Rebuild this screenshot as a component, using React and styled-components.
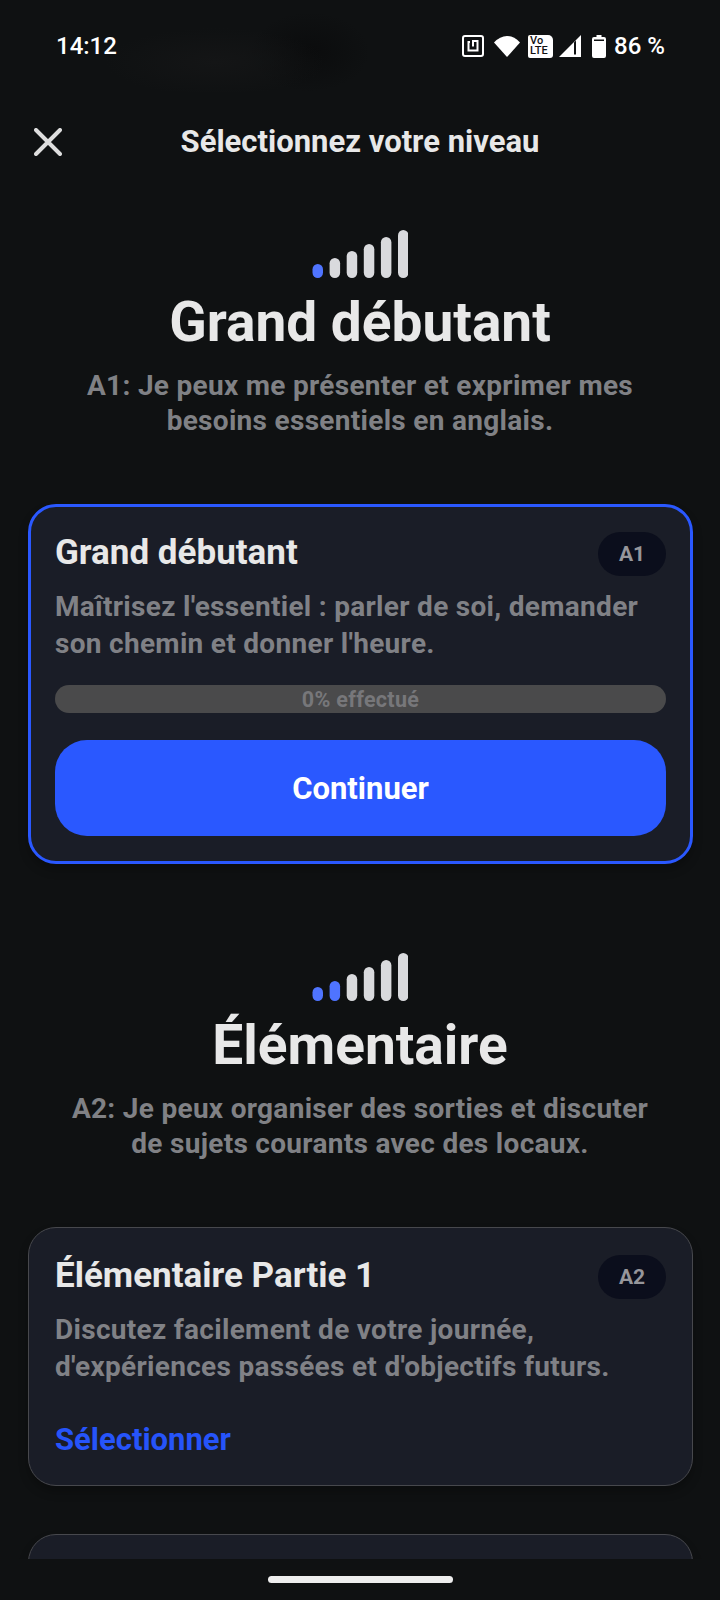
import React from "react";
import styled, { createGlobalStyle } from "styled-components";

const GlobalStyle = createGlobalStyle`
  html, body {
    margin: 0;
    padding: 0;
    background: #0f1112;
  }
  * {
    box-sizing: border-box;
  }
`

const Screen = styled.div`
  display: flex;
  flex-direction: column;
  width: 720px;
  height: 1600px;
  overflow: hidden;
  background: #0f1112;
  font-family: Roboto, "Noto Sans", sans-serif;
  font-weight: 700;
`

const Scroller = styled.div`
  flex: 1;
  min-height: 0;
  overflow: hidden;
`

const StatusBar = styled.div`
  display: flex;
  align-items: center;
  justify-content: space-between;
  height: 92px;
  padding: 0 55px 0 56px;
  color: #fff;
  background: radial-gradient(ellipse 110px 34px at 215px 62px, #141516, transparent),
    radial-gradient(ellipse 60px 40px at 310px 52px, #0b0c0d, transparent);
`

const Clock = styled.span`
  font-size: 24px;
  font-weight: 500;
`

const StatusIcons = styled.div`
  display: flex;
  align-items: center;
`

const StatusIcon = styled.span`
  display: flex;
  margin-right: ${(p) => p.$gap}px;
`

const Battery = styled.span`
  font-size: 24px;
  font-weight: 500;
  white-space: nowrap;
`

const VolteBadge = styled.span`
  display: flex;
  flex-direction: column;
  justify-content: center;
  width: 25px;
  height: 23px;
  margin-right: 6px;
  padding-left: 2px;
  border-radius: 2px 5px 3px 2px;
  background: #fff;
  color: #111;
  font-size: 11px;
  font-weight: 500;
  line-height: 10.500px;
`

const Header = styled.div`
  display: flex;
  align-items: center;
  justify-content: center;
  position: relative;
  height: 98px;
`

const CloseButton = styled.div`
  position: absolute;
  left: 34px;
  top: 36px;
  display: flex;
  color: #dedede;
`

const HeaderTitle = styled.h1`
  margin: 0;
  color: #e8e8e8;
  font-size: 31px;
  font-weight: 700;
`

const LevelHero = styled.section`
  display: flex;
  flex-direction: column;
  align-items: center;
  padding-top: ${(p) => p.$top}px;
  text-align: center;
`

const LevelTitle = styled.h2`
  margin: 12px 0 14px;
  color: #e8e8e8;
  font-size: 55px;
  font-weight: 700;
  line-height: 64px;
`

const LevelText = styled.p`
  margin: 0;
  color: #808185;
  font-size: 28px;
  line-height: 35px;
  letter-spacing: 0.3px;
`

const Card = styled.div`
  margin: ${(p) => p.$top}px 27px 0 28px;
  min-height: ${(p) => p.$minHeight || 0}px;
  padding: calc(28px - ${(p) => (p.$selected ? 3 : 1)}px) calc(27px - ${(p) => (p.$selected ? 3 : 1)}px);
  border: ${(p) => (p.$selected ? "3px solid #2a58ff" : "1px solid #47484d")};
  border-radius: 28px;
  background: #1a1d27;
  box-shadow: 0 6px 10px rgba(0, 0, 0, 0.25);
`

const CardTop = styled.div`
  display: flex;
  align-items: center;
  justify-content: space-between;
  height: 44px;
  margin-bottom: 12px;
`

const CardTitle = styled.h3`
  margin: 0 0 4px;
  color: #e8e8e8;
  font-size: 35px;
  font-weight: 700;
`

const LevelBadge = styled.span`
  display: flex;
  align-items: center;
  justify-content: center;
  width: 68px;
  height: 44px;
  border-radius: 22px;
  background: #0b0e1c;
  color: #96969b;
  font-size: 21px;
`

const CardText = styled.p`
  margin: 0;
  color: #808186;
  font-size: 28px;
  line-height: 37px;
  letter-spacing: 0.3px;
`

const Progress = styled.div`
  display: flex;
  align-items: center;
  justify-content: center;
  height: 28px;
  margin-top: 23px;
  border-radius: 14px;
  background: #4a4a4b;
  color: #77777a;
  font-size: 21.500px;
  letter-spacing: 0.3px;
`

const PrimaryButton = styled.button`
  display: block;
  width: 100%;
  height: 96px;
  margin-top: 27px;
  border: 0;
  border-radius: 32px;
  background: #2a58ff;
  color: #fff;
  font-family: inherit;
  font-size: 31px;
  font-weight: 700;
`

const SelectLink = styled.a`
  display: block;
  margin: 35px 0 -2px;
  color: #2654fa;
  font-size: 31px;
  line-height: 40px;
`

const NavBar = styled.div`
  display: flex;
  justify-content: center;
  flex: none;
  height: 41px;
  padding-top: 17px;
  background: #0f1112;
`

const HomePill = styled.div`
  width: 185px;
  height: 7px;
  border-radius: 4px;
  background: #eeeeee;
`

const LevelBars = ({ active }) => {
  const heights = [14, 20, 27, 34, 41, 48];
  return (
    <svg width="96" height="48" viewBox="0 0 96 48">
      {heights.map((h, i) => (
        <rect
          key={h}
          x={0.5 + i * 17.1}
          y={48 - h}
          width="10.5"
          height={h}
          rx="5.25"
          fill={i < active ? "#4f74ff" : "#d9dadd"}
        />
      ))}
    </svg>
  );
}

const App = () => {
  return (
    <Screen>
      <GlobalStyle />
      <Scroller>
        <StatusBar>
          <Clock>14:12</Clock>
          <StatusIcons>
            <StatusIcon $gap={10}>
              <svg width="22" height="22" viewBox="0 0 22 22" fill="none" stroke="#fff">
                <rect x="1" y="1" width="20" height="20" rx="2" strokeWidth="2" />
                <path d="M8 7H6.500v8.500h9V6H11v5.500" strokeWidth="2" />
              </svg>
            </StatusIcon>
            <StatusIcon $gap={8}>
              <svg width="26" height="21" viewBox="0 0 26 21">
                <path d="M13 21 0 6.500Q6 0 13 0t13 6.500Z" fill="#fff" />
              </svg>
            </StatusIcon>
            <VolteBadge>
              <span>Vo</span>
              <span>LTE</span>
            </VolteBadge>
            <StatusIcon $gap={11}>
              <svg width="22" height="22" viewBox="0 0 22 22">
                <path d="M22 0v22H0ZM15 7.500v12h2v-14Z" fill="#fff" fillRule="evenodd" />
              </svg>
            </StatusIcon>
            <StatusIcon $gap={8}>
              <svg width="14" height="23" viewBox="0 0 14 23">
                <path d="M4.500 0h5v2H12a2 2 0 0 1 2 2v17a2 2 0 0 1-2 2H2a2 2 0 0 1-2-2V4a2 2 0 0 1 2-2h2.500ZM2 4.500V6h10V4.500Z" fill="#fff" fillRule="evenodd" />
              </svg>
            </StatusIcon>
            <Battery>86 %</Battery>
          </StatusIcons>
        </StatusBar>
        <Header>
          <CloseButton>
            <svg width="28" height="28" viewBox="0 0 28 28" fill="none" stroke="currentColor" strokeWidth="4" strokeLinecap="round">
              <path d="M2 2l24 24M26 2 2 26" />
            </svg>
          </CloseButton>
          <HeaderTitle>Sélectionnez votre niveau</HeaderTitle>
        </Header>

        <LevelHero $top={40}>
          <LevelBars active={1} />
          <LevelTitle>Grand débutant</LevelTitle>
          <LevelText>
            A1: Je peux me présenter et exprimer mes<br />
            besoins essentiels en anglais.
          </LevelText>
        </LevelHero>
        <Card $selected $top={66}>
          <CardTop>
            <CardTitle>Grand débutant</CardTitle>
            <LevelBadge>A1</LevelBadge>
          </CardTop>
          <CardText>
            Maîtrisez l'essentiel : parler de soi, demander<br />
            son chemin et donner l'heure.
          </CardText>
          <Progress>0% effectué</Progress>
          <PrimaryButton>Continuer</PrimaryButton>
        </Card>

        <LevelHero $top={89}>
          <LevelBars active={2} />
          <LevelTitle>Élémentaire</LevelTitle>
          <LevelText>
            A2: Je peux organiser des sorties et discuter<br />
            de sujets courants avec des locaux.
          </LevelText>
        </LevelHero>
        <Card $top={66}>
          <CardTop>
            <CardTitle>Élémentaire Partie 1</CardTitle>
            <LevelBadge>A2</LevelBadge>
          </CardTop>
          <CardText>
            Discutez facilement de votre journée,<br />
            d'expériences passées et d'objectifs futurs.
          </CardText>
          <SelectLink>Sélectionner</SelectLink>
        </Card>
        <Card $top={48} $minHeight={120} />
      </Scroller>
      <NavBar>
        <HomePill />
      </NavBar>
    </Screen>
  );
}

export default App;
